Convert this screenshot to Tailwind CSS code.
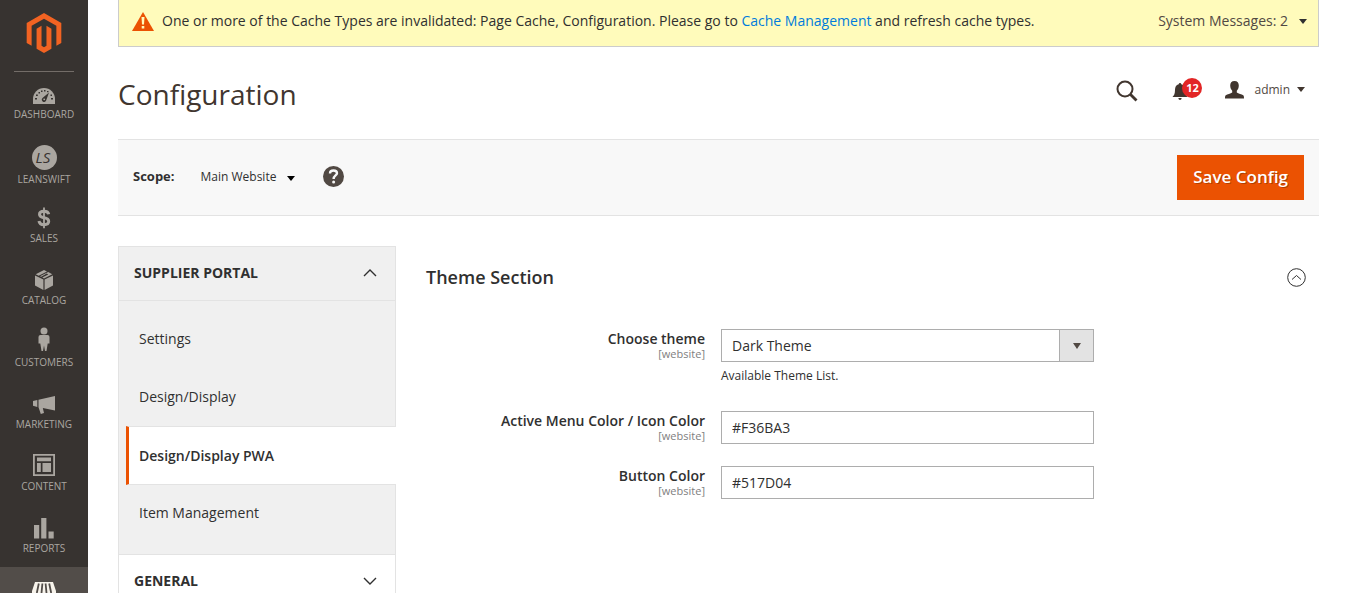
<!DOCTYPE html>
<html lang="en">
<head>
<meta charset="utf-8">
<meta name="viewport" content="width=device-width, initial-scale=1">
<title>Configuration</title>
<script src="https://cdn.jsdelivr.net/npm/@tailwindcss/browser@4"></script>
</head>
<body class="flex h-screen overflow-hidden bg-white font-['Open_Sans',sans-serif] text-sm text-[#303030]">

<aside class="w-[88px] shrink-0 bg-[#373330] text-[#aaa6a0]">
  <a href="#" aria-label="Home" class="mx-[14px] flex h-[72px] justify-center border-b border-[#736d68] pt-[13px]">
    <svg class="h-10 w-10" viewBox="0 0 24 24" fill="#f26322"><path d="M12 24l-4.455-2.572v-12l2.97-1.715v12.001l1.485.902 1.485-.902V7.713l2.971 1.715v12L12 24zM22.391 6v12l-2.969 1.714V7.713L12 3.43 4.574 7.713v12.001L1.609 18V6L12 0l10.391 6z"/></svg>
  </a>
  <nav class="-mt-px text-center text-[10px] leading-3">
    <a href="#" class="block h-[62px] pt-[13px]">
      <span class="flex h-6 items-center justify-center"><svg width="22" height="16" viewBox="0 0 22 16"><path fill="#aaa6a0" d="M0 16V11a11 11 0 0 1 22 0v5z"/><g fill="#373330"><rect x="2" y="10" width="2" height="1.500"/><rect x="3" y="6.500" width="1.800" height="1.500"/><rect x="5.500" y="4" width="1.500" height="1.500"/><rect x="8" y="2.500" width="1.500" height="1.500"/><rect x="11" y="2" width="1.500" height="1.500"/><rect x="14" y="3" width="1.500" height="1.200"/><rect x="17.500" y="6.500" width="1.500" height="1.500"/><rect x="18" y="10" width="2" height="1.500"/><path d="M16 4.500 13.300 12a2.300 2.300 0 1 1-3.800-2.100z"/></g><circle cx="11.200" cy="11.300" r=".9" fill="#aaa6a0"/></svg></span>
      <span class="block">DASHBOARD</span>
    </a>
    <a href="#" class="block h-[62px] pt-3">
      <span class="flex h-[25px] items-center justify-center"><span class="flex h-[25px] w-[25px] items-center justify-center rounded-full bg-[#aaa6a0] pr-0.5 text-[15px] leading-none text-[#373330] italic">LS</span></span>
      <span class="block pt-[3px]">LEANSWIFT</span>
    </a>
    <a href="#" class="block h-[62px] pt-[11px]">
      <span class="flex h-[26px] items-start justify-center pt-px"><svg width="14" height="22" viewBox="0 0 14 22" fill="none" stroke="#aaa6a0"><path stroke-width="3" d="M11.700 7.200C11.300 5 9.500 4.200 7 4.200S2.500 5.400 2.500 7.300 4 10.200 7 10.700s4.700 1.500 4.700 3.600-2 3.400-4.700 3.400-4.700-1.300-5-3.700"/><path stroke-width="1.800" d="M7 .5v20.800"/></svg></span>
      <span class="block">SALES</span>
    </a>
    <a href="#" class="block h-[62px] pt-[11px]">
      <span class="flex h-[26px] items-start justify-center pt-px"><svg width="20" height="22" viewBox="0 0 20 22" fill="#aaa6a0"><path d="M1 6.500 9.400 10.500V21L1 16.500zM19 6.500 10.600 10.500V21L19 16.500zM10 1l3 1.500-8.300 4.200L1.700 5.300zM14.200 3.100l4.100 2.200L10 9.500 8.200 8.500l6-3-1.500-1-5.500 3.200-1.300-.5z"/></svg></span>
      <span class="block">CATALOG</span>
    </a>
    <a href="#" class="block h-[62px] pt-2">
      <span class="flex h-[29px] items-start justify-center"><svg width="12" height="24" viewBox="0 0 12 24" fill="#aaa6a0"><circle cx="6" cy="4" r="3.500"/><path d="M2.500 8h7Q11.500 8 11.500 10v6.500h-1.800L8.500 24H7L6 18.500 5 24H3.500L2.300 16.500H.5V10Q.5 8 2.500 8z"/></svg></span>
      <span class="block">CUSTOMERS</span>
    </a>
    <a href="#" class="block h-[62px] pt-[11px]">
      <span class="flex h-[26px] items-center justify-center"><svg width="22" height="18" viewBox="0 0 22 18" fill="#aaa6a0"><path d="M22 0v14.500L9.800 12 11 17l-3.200 1-2.300-6.700V3.700zM0 5l4.300-1v7L0 9.700z"/></svg></span>
      <span class="block">MARKETING</span>
    </a>
    <a href="#" class="block h-[62px] pt-[11px]">
      <span class="flex h-[26px] items-start justify-center"><svg width="22" height="22" viewBox="0 0 22 22" fill="#aaa6a0"><path fill-rule="evenodd" d="M0 0h22v22H0zM1.800 1.800v18.400h18.400V1.800z"/><path d="M4 3.500h14v3.800H4zM4 9h3.800v9H4zM9.500 9H18v9H9.500z"/></svg></span>
      <span class="block">CONTENT</span>
    </a>
    <a href="#" class="block h-[62px] pt-[11px]">
      <span class="flex h-[26px] items-start justify-center pt-px"><svg width="20" height="22" viewBox="0 0 20 22" fill="#aaa6a0"><path d="M0 8h5.200v13.500H0zM7.200 1h5.200v20.500H7.200zM14.500 14.500h5.200v7h-5.200z"/></svg></span>
      <span class="block">REPORTS</span>
    </a>
    <a href="#" aria-label="Stores" class="block h-[62px] bg-[#524d49] pt-[15px]">
      <span class="flex justify-center"><svg width="24" height="22" viewBox="0 0 24 22" fill="#f7f3eb"><path d="M3 0h18l3 9v2.500q-3 3-6 0-3 3-6 0-3 3-6 0-3 3-6 0V9zM2 14h20v8H2z"/><path fill="none" stroke="#524d49" stroke-width="1.800" d="M6.800 1.500 4.800 11M10.400 1.500 9.500 11M13.600 1.500l.9 9.500M17.200 1.500l2 9.500"/></svg></span>
    </a>
  </nav>
</aside>

<div class="min-w-0 flex-1 pr-[27px] pl-[30px]">
  <div class="flex h-[47px] items-center border border-t-0 border-[#ccc] bg-[#fffbbb] pr-[11px] pb-1 pl-[13px]">
    <svg class="mr-2 shrink-0" width="22" height="19" viewBox="0 0 22 19"><path fill="#eb5202" d="M11 0 22 19H0z"/><path fill="#fffbbb" d="M9.500 5h3L12 12.500h-2zM9.700 14h2.600v2.500H9.700z"/></svg>
    <p class="flex-1">One or more of the Cache Types are invalidated: Page Cache, Configuration. Please go to <a href="#" class="text-[#007bdb]">Cache Management</a> and refresh cache types.</p>
    <button class="flex items-center gap-[11px] text-[#514943]">System Messages: 2
      <svg width="8" height="5" viewBox="0 0 8 5" fill="#303030"><path d="M0 0h8L4 5z"/></svg>
    </button>
  </div>

  <header class="flex h-[92px] items-center pr-[14px]">
    <h1 class="flex-1 pt-0.5 text-[28px] leading-9 text-[#41362f]">Configuration</h1>
    <div class="flex items-center pb-1">
      <button aria-label="Search" class="mr-[34px]"><svg width="22" height="22" viewBox="0 0 22 22" fill="none" stroke="#41362f"><circle cx="9" cy="9" r="7.500" stroke-width="2"/><path stroke-width="2.800" d="m14.500 14.500 6 6"/></svg></button>
      <button aria-label="Notifications" class="relative mr-[23px] h-5 w-[30px]">
        <svg class="mt-px" width="16" height="17" viewBox="0 0 16 17" fill="#41362f"><path d="M8 0q1.200 0 1.300 1.200C12 2 13 4 13 7c0 4 1 5.500 2.500 7H.5C2 12.500 3 11 3 7c0-3 1-5 3.700-5.800Q6.800 0 8 0zM6.300 15h3.400q-.3 2-1.700 2t-1.700-2z"/></svg>
        <span class="absolute -top-[3px] right-0 flex h-5 w-5 items-center justify-center rounded-full bg-[#e22626] text-[11px] font-bold text-white">12</span>
      </button>
      <button class="flex items-center pb-[3px] text-xs text-[#514943]">
        <svg class="mr-[10px]" width="19" height="18" viewBox="0 0 19 18" fill="#41362f"><path d="M9.500 0c3 0 4.300 2 4.300 4.500 0 2.700-1 4-2 5.200v1.800c1.500 1.300 5 1.600 6.400 2.800.8.700.8 1.900.8 3.200H0c0-1.300 0-2.500.8-3.200 1.400-1.200 4.900-1.500 6.400-2.800V9.700c-1-1.200-2-2.500-2-5.200C5.200 2 6.500 0 9.500 0z"/></svg>
        admin
        <svg class="ml-[7px]" width="8" height="5" viewBox="0 0 8 5" fill="#41362f"><path d="M0 0h8L4 5z"/></svg>
      </button>
    </div>
  </header>

  <div class="flex h-[77px] items-center border-y border-[#e3e3e3] bg-[#f8f8f8] px-[15px]">
    <span class="mr-[26px] pb-0.5 text-[13px] font-bold" id="scope">Scope:</span>
    <button aria-labelledby="scope" aria-haspopup="menu" class="mr-7 flex items-center gap-[11px] pb-0.5 text-xs">Main Website
      <svg class="mt-1" width="8" height="5" viewBox="0 0 8 5"><path d="M0 0h8L4 5z"/></svg>
    </button>
    <button aria-label="Help" class="mb-0.5 flex h-[21px] w-[21px] items-center justify-center rounded-full bg-[#514943]">
      <svg width="11" height="15" viewBox="0 0 11 15"><path fill="none" stroke="#f8f8f8" stroke-width="2.400" d="M2 4.500C2 2.500 3.500 1.500 5.500 1.500S9 2.600 9 4.200C9 6.500 5.600 6.500 5.600 10"/><circle cx="5.600" cy="13" r="1.500" fill="#f8f8f8"/></svg>
    </button>
    <button class="ml-auto h-[45px] bg-[#eb5202] px-4 text-[17px] font-semibold text-white text-shadow-[1px_1px_0_rgba(0,0,0,0.25)]">Save Config</button>
  </div>

  <div class="flex gap-[30px] pt-[30px]">
    <nav class="w-[278px] shrink-0">
      <button class="flex h-[55px] w-full items-center justify-between border border-[#e3e3e3] bg-[#f0f0f0] pr-[18px] pb-0.5 pl-[15px] font-bold">SUPPLIER PORTAL
        <svg width="14" height="8" viewBox="0 0 14 8" fill="none" stroke="#303030" stroke-width="1.400"><path d="m1 7 6-6 6 6"/></svg>
      </button>
      <ul class="border-l border-[#e3e3e3] bg-[#f0f0f0] bg-[linear-gradient(#e3e3e3,#e3e3e3)] bg-[length:1px_100%] bg-right bg-no-repeat pt-[9px] pb-[13px]">
        <li><a href="#" class="flex h-[58px] items-center px-5">Settings</a></li>
        <li><a href="#" class="flex h-[58px] items-center px-5">Design/Display</a></li>
        <li class="pl-[7px]"><a href="#" aria-current="page" class="flex h-[59px] items-center border-y border-l-[3px] border-y-[#e3e3e3] border-l-[#eb5202] bg-white pl-[10px] font-semibold">Design/Display PWA</a></li>
        <li><a href="#" class="flex h-14 items-center px-5">Item Management</a></li>
      </ul>
      <button class="flex h-[55px] w-full items-center justify-between border border-[#e3e3e3] bg-white pr-[18px] pb-0.5 pl-[15px] font-bold">GENERAL
        <svg width="14" height="8" viewBox="0 0 14 8" fill="none" stroke="#303030" stroke-width="1.400"><path d="m1 1 6 6 6-6"/></svg>
      </button>
    </nav>

    <main class="min-w-0 flex-1">
      <div class="flex h-[62px] items-center justify-between pr-[13px]">
        <h2 class="text-lg font-semibold">Theme Section</h2>
        <button aria-label="Collapse section"><svg width="19" height="19" viewBox="0 0 19 19" fill="none" stroke="#303030"><circle cx="9.500" cy="9.500" r="8.800"/><path d="m5 11.500 4.500-4 4.500 4"/></svg></button>
      </div>
      <form class="pt-[21px]">
        <div class="grid grid-cols-[295fr_373fr_225fr] pb-[26px]">
          <label for="theme" class="pr-4 text-right leading-5 font-semibold">Choose theme<span class="block text-[11px] leading-[10px] font-normal text-[#808080]">[website]</span></label>
          <div>
            <div class="relative">
              <select id="theme" class="block h-[33px] w-full appearance-none border border-[#adadad] bg-white pr-10 pl-[10px]"><option>Dark Theme</option></select>
              <span class="pointer-events-none absolute inset-y-0 right-0 flex w-[35px] items-center justify-center border border-[#adadad] bg-[#e3e3e3]"><svg width="8" height="6" viewBox="0 0 8 6" fill="#514943"><path d="M0 0h8L4 6z"/></svg></span>
            </div>
            <p class="pt-[5px] text-xs leading-[18px]">Available Theme List.</p>
          </div>
        </div>
        <div class="grid grid-cols-[295fr_373fr_225fr] pb-[22px]">
          <label for="menu" class="pr-4 text-right leading-5 font-semibold">Active Menu Color / Icon Color<span class="block text-[11px] leading-[10px] font-normal text-[#808080]">[website]</span></label>
          <input id="menu" type="text" value="#F36BA3" class="h-[33px] w-full min-w-0 border border-[#adadad] px-[10px]">
        </div>
        <div class="grid grid-cols-[295fr_373fr_225fr]">
          <label for="button" class="pr-4 text-right leading-5 font-semibold">Button Color<span class="block text-[11px] leading-[10px] font-normal text-[#808080]">[website]</span></label>
          <input id="button" type="text" value="#517D04" class="h-[33px] w-full min-w-0 border border-[#adadad] px-[10px]">
        </div>
      </form>
    </main>
  </div>
</div>
</body>
</html>
